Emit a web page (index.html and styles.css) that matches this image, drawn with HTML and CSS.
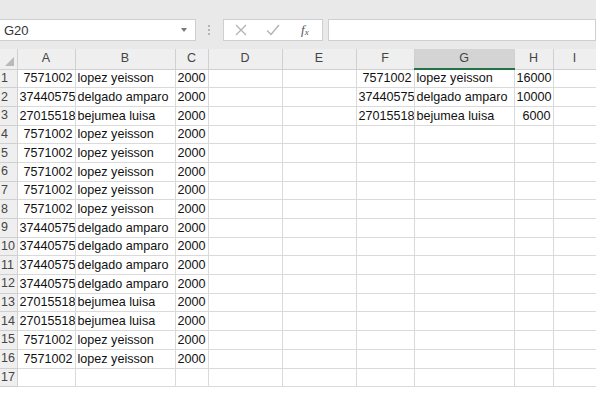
FILE: index.html
```html
<!DOCTYPE html>
<html lang="es">
<head>
    <title>Hoja1</title>
    <link rel="stylesheet" href="styles.css">
</head>
<body>
    <div class="bar">
        <div class="namebox">
            <span class="ref">G20</span>
            <span class="arrow"></span>
        </div>
        <div class="dots">
            <span></span><span></span><span></span>
        </div>
        <div class="buttons">
            <svg class="btn-x" width="12" height="12" viewBox="0 0 12 12">
                <path d="M1 1 L11 11 M11 1 L1 11" stroke="#b3b3b3" stroke-width="1.3" fill="none"/>
            </svg>
            <svg class="btn-ok" width="14" height="12" viewBox="0 0 14 12">
                <path d="M1 6.5 L5 10.5 L13 1" stroke="#b3b3b3" stroke-width="1.4" fill="none"/>
            </svg>
            <span class="fx">f<sub>x</sub></span>
        </div>
        <div class="formula"></div>
    </div>

    <table class="sheet">
        <colgroup>
            <col class="c-row">
            <col class="c-a">
            <col class="c-b">
            <col class="c-c">
            <col class="c-d">
            <col class="c-e">
            <col class="c-f">
            <col class="c-g">
            <col class="c-h">
            <col class="c-i">
        </colgroup>
        <tr class="head">
            <th class="corner"><span class="tri"></span></th>
            <th>A</th><th>B</th><th>C</th><th>D</th><th>E</th><th>F</th><th class="sel">G</th><th>H</th><th>I</th>
        </tr>
        <tr><th>1</th><td class="num">7571002</td><td>lopez yeisson</td><td>2000</td><td></td><td></td><td class="num">7571002</td><td>lopez yeisson</td><td class="num">16000</td><td></td></tr>
        <tr><th>2</th><td class="num">37440575</td><td>delgado amparo</td><td>2000</td><td></td><td></td><td class="num">37440575</td><td>delgado amparo</td><td class="num">10000</td><td></td></tr>
        <tr><th>3</th><td class="num">27015518</td><td>bejumea luisa</td><td>2000</td><td></td><td></td><td class="num">27015518</td><td>bejumea luisa</td><td class="num">6000</td><td></td></tr>
        <tr><th>4</th><td class="num">7571002</td><td>lopez yeisson</td><td>2000</td><td></td><td></td><td></td><td></td><td></td><td></td></tr>
        <tr><th>5</th><td class="num">7571002</td><td>lopez yeisson</td><td>2000</td><td></td><td></td><td></td><td></td><td></td><td></td></tr>
        <tr><th>6</th><td class="num">7571002</td><td>lopez yeisson</td><td>2000</td><td></td><td></td><td></td><td></td><td></td><td></td></tr>
        <tr><th>7</th><td class="num">7571002</td><td>lopez yeisson</td><td>2000</td><td></td><td></td><td></td><td></td><td></td><td></td></tr>
        <tr><th>8</th><td class="num">7571002</td><td>lopez yeisson</td><td>2000</td><td></td><td></td><td></td><td></td><td></td><td></td></tr>
        <tr><th>9</th><td class="num">37440575</td><td>delgado amparo</td><td>2000</td><td></td><td></td><td></td><td></td><td></td><td></td></tr>
        <tr><th>10</th><td class="num">37440575</td><td>delgado amparo</td><td>2000</td><td></td><td></td><td></td><td></td><td></td><td></td></tr>
        <tr><th>11</th><td class="num">37440575</td><td>delgado amparo</td><td>2000</td><td></td><td></td><td></td><td></td><td></td><td></td></tr>
        <tr><th>12</th><td class="num">37440575</td><td>delgado amparo</td><td>2000</td><td></td><td></td><td></td><td></td><td></td><td></td></tr>
        <tr><th>13</th><td class="num">27015518</td><td>bejumea luisa</td><td>2000</td><td></td><td></td><td></td><td></td><td></td><td></td></tr>
        <tr><th>14</th><td class="num">27015518</td><td>bejumea luisa</td><td>2000</td><td></td><td></td><td></td><td></td><td></td><td></td></tr>
        <tr><th>15</th><td class="num">7571002</td><td>lopez yeisson</td><td>2000</td><td></td><td></td><td></td><td></td><td></td><td></td></tr>
        <tr><th>16</th><td class="num">7571002</td><td>lopez yeisson</td><td>2000</td><td></td><td></td><td></td><td></td><td></td><td></td></tr>
        <tr><th>17</th><td></td><td></td><td></td><td></td><td></td><td></td><td></td><td></td><td></td></tr>
    </table>
</body>
</html>
```

FILE: styles.css
```css
body {
    margin: 0;
    width: 596px;
    font-family: "Liberation Sans", Arial, sans-serif;
    background-color: #fff;
    color: #111;
}

/* formula bar */

.bar {
    display: flex;
    align-items: flex-end;
    height: 49px;
    padding-bottom: 8px;
    box-sizing: border-box;
    background-color: #e9e9e9;
}

.namebox {
    display: flex;
    align-items: center;
    justify-content: space-between;
    width: 196px;
    height: 22px;
    box-sizing: border-box;
    padding: 0 8px 0 4px;
    background-color: #fff;
    border: 1px solid #cfcfcf;
    border-left: none;
}

.ref {
    font-size: 13px;
    color: #333;
}

.arrow {
    width: 0;
    height: 0;
    border-left: 3px solid transparent;
    border-right: 3px solid transparent;
    border-top: 4px solid #777;
}

.dots {
    display: flex;
    flex-direction: column;
    gap: 2px;
    margin: 0 13px 6px 12px;
}

.dots span {
    width: 2px;
    height: 2px;
    background-color: #b5b5b5;
}

.buttons {
    display: flex;
    align-items: center;
    width: 100px;
    height: 22px;
    box-sizing: border-box;
    padding-left: 11px;
    background-color: #fff;
    border: 1px solid #cfcfcf;
}

.btn-ok {
    margin-left: 19px;
}

.fx {
    margin-left: 21px;
    font-family: "Liberation Serif", serif;
    font-style: italic;
    font-size: 13px;
    color: #555;
}

.fx sub {
    font-size: 9px;
    vertical-align: -1px;
}

.formula {
    flex: 1;
    height: 22px;
    margin-left: 5px;
    box-sizing: border-box;
    background-color: #fff;
    border: 1px solid #cfcfcf;
}

/* grid */

.sheet {
    table-layout: fixed;
    border-collapse: collapse;
    width: 596px;
    font-size: 12.6px;
}

.c-row { width: 17px; }
.c-a { width: 58px; }
.c-b { width: 100px; }
.c-c { width: 33px; }
.c-d { width: 74px; }
.c-e { width: 74px; }
.c-f { width: 58px; }
.c-g { width: 100px; }
.c-h { width: 39px; }
.c-i { width: 43px; }

.sheet tr {
    height: 18.7px;
}

.sheet tr.head {
    height: 20px;
}

.sheet td {
    padding: 0 2px 1px 2px;
    border: 1px solid #dadada;
    white-space: nowrap;
    overflow: hidden;
    line-height: 15px;
    vertical-align: bottom;
}

.sheet td.num {
    text-align: right;
}

.sheet th {
    padding: 0;
    font-weight: normal;
    line-height: 15px;
    color: #444;
    background-color: #efefef;
    border: 1px solid #d0d0d0;
}

.head th {
    font-size: 12.5px;
    text-align: center;
    border-top: none;
}

.head th.sel {
    background-color: #d4d4d4;
    border-bottom: 2px solid #217346;
}

.sheet tr th:first-child {
    text-align: left;
    padding-left: 1px;
    border-left: none;
    font-size: 12.5px;
}

.corner {
    position: relative;
}

.tri {
    position: absolute;
    right: 3px;
    bottom: 3px;
    width: 0;
    height: 0;
    border-left: 9px solid transparent;
    border-bottom: 9px solid #b9b9b9;
}
```
